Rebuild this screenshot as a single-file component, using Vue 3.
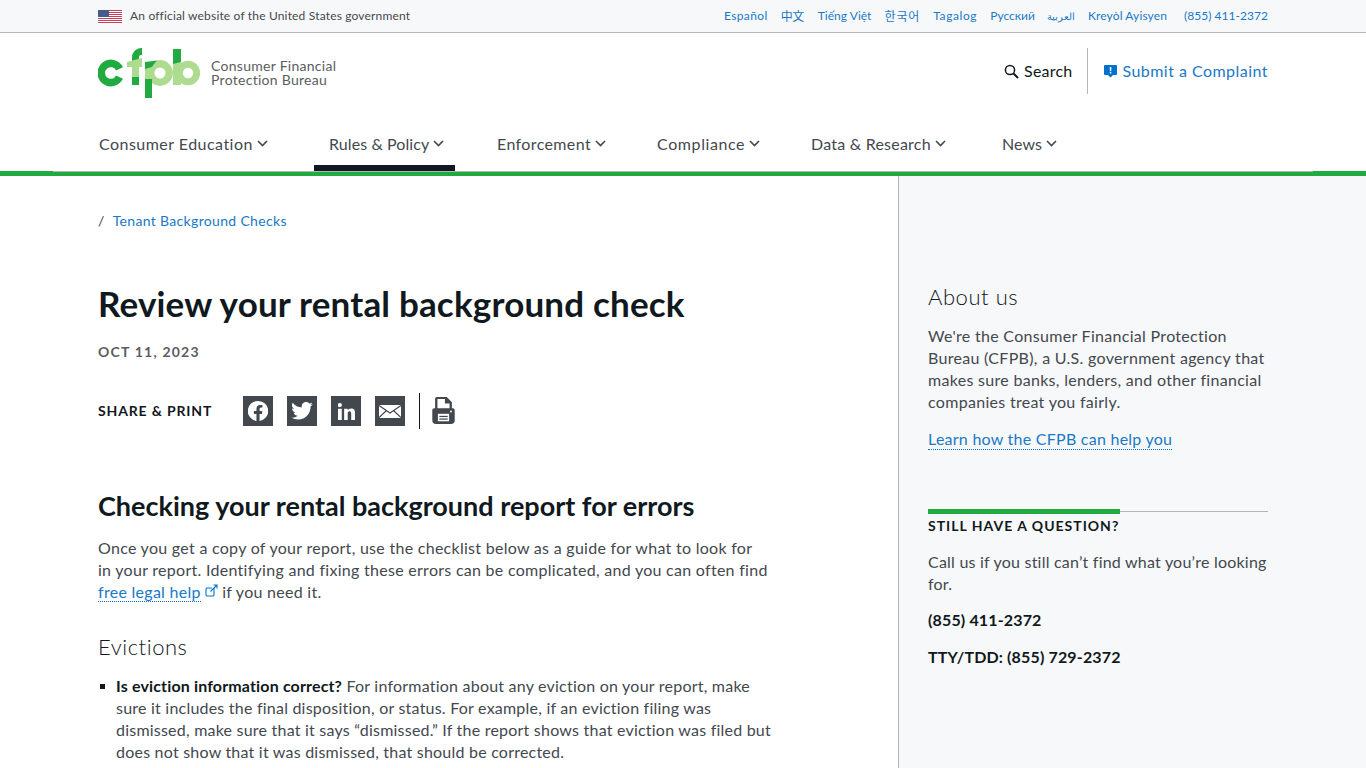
<script setup>
const langs = [
  ['Español', 'e'], ['中文', 'c'], ['Tiếng Việt', 'v'], ['한국어', 'k'], ['Tagalog', 't'],
  ['Русский', 'r'], ['العربية', 'a'], ['Kreyòl Ayisyen', 'l'], ['(855) 411-2372', 'p']
]
const nav = [
  { t: 'Consumer Education', w: 230, ls: 0.47, active: false },
  { t: 'Rules & Policy', w: 168, ls: 0.09, active: true },
  { t: 'Enforcement', w: 160, ls: 0.38, active: false },
  { t: 'Compliance', w: 154, ls: 0.6, active: false },
  { t: 'Data & Research', w: 191, ls: 0.23, active: false },
  { t: 'News', w: 100, ls: 0.05, active: false }
]
</script>

<template>
  <div class="page">
    <header>
      <div class="topbar">
        <div class="wrap topbar-in">
          <div class="official">
            <svg class="flag" width="24" height="13" viewBox="0 0 24 13">
              <rect width="24" height="13" fill="#fff"/>
              <g fill="#c8415a">
                <rect y="0" width="24" height="1"/><rect y="2" width="24" height="1"/><rect y="4" width="24" height="1"/>
                <rect y="6" width="24" height="1"/><rect y="8" width="24" height="1"/><rect y="10" width="24" height="1"/><rect y="12" width="24" height="1"/>
              </g>
              <rect width="11" height="7" fill="#4a5a8c"/>
            </svg>
            <span>An official website of the United States government</span>
          </div>
          <nav class="langs">
            <a v-for="l in langs" :key="l[0]" :class="'lang-' + l[1]">{{ l[0] }}</a>
          </nav>
        </div>
      </div>
      <div class="wrap brand-row">
        <div class="logo">
          <svg width="102" height="50" viewBox="0 0 102 50">
            <path d="M21.500 20.800A9.600 9.600 0 1 0 21.500 29.200" fill="none" stroke="#20aa3f" stroke-width="7.600"/>
            <path d="M34 13V9A9 9 0 0 1 43 0h1v7h-1a2 2 0 0 0-2 2v3z" fill="#20aa3f"/>
            <path d="M29 14l15-4v9h-3v11h-7V19h-5z" fill="#addc91"/>
            <path d="M34 29h7v8h-7z" fill="#20aa3f"/>
            <path d="M62 15.800a9.200 9.200 0 1 1 0 18.400 9.200 9.200 0 0 1 0-18.400z" fill="none" stroke="#addc91" stroke-width="7.400"/>
            <path d="M47 14h7v17h-7z" fill="#addc91"/>
            <path d="M47 31h7v19h-7z" fill="#20aa3f"/>
            <path d="M47 14l12-1.500-3 3.500-2 3-7 2z" fill="#20aa3f"/>
            <path d="M90 16.300a8.700 8.700 0 1 1 0 17.400 8.700 8.700 0 0 1 0-17.400z" fill="none" stroke="#addc91" stroke-width="7"/>
            <path d="M75 13h8v24h-8z" fill="#addc91"/>
            <path d="M75 1h8v13l-8 2z" fill="#20aa3f"/>
          </svg>
          <div class="logo-text">Consumer Financial<br>Protection Bureau</div>
        </div>
        <div class="actions">
          <a class="search">
            <svg width="15" height="15" viewBox="0 0 15 15" fill="none" stroke="#101820" stroke-width="1.500">
              <circle cx="6" cy="6" r="4.600"/><path d="M9.500 9.500L14 14" stroke-width="2"/>
            </svg>
            Search
          </a>
          <span class="vr"></span>
          <a class="complaint">
            <svg width="13" height="13" viewBox="0 0 13 13">
              <path d="M1 0h11a1 1 0 0 1 1 1v8a1 1 0 0 1-1 1H9l-2.500 2.500L4 10H1a1 1 0 0 1-1-1V1a1 1 0 0 1 1-1z" fill="#0072ce"/>
              <rect x="5.800" y="2" width="1.500" height="4.200" fill="#fff"/><rect x="5.800" y="7" width="1.500" height="1.500" fill="#fff"/>
            </svg>
            Submit a Complaint
          </a>
        </div>
      </div>
      <div class="wrap nav">
        <a v-for="n in nav" :key="n.t" class="nav-item" :class="{ active: n.active }" :style="{ width: n.w + 'px', letterSpacing: n.ls + 'px' }">
          <span>{{ n.t }}</span>
          <svg width="11" height="7" viewBox="0 0 11 7" fill="none" stroke="#43484e" stroke-width="1.600"><path d="M1 1l4.500 4.500L10 1"/></svg>
        </a>
      </div>
      <div class="rule"><div class="rule-gray"></div></div>
    </header>

    <div class="columns">
      <main>
        <div class="crumb"><span class="slash">/</span><a>Tenant Background Checks</a></div>
        <h1>Review your rental background check</h1>
        <div class="date">OCT 11, 2023</div>
        <div class="share">
          <span class="share-label">SHARE &amp; PRINT</span>
          <div class="share-icons">
            <span class="sq">
              <svg width="20" height="20" viewBox="1 1 22 22"><path fill="#fff" fill-rule="evenodd" d="M12 1a11 11 0 0 0-1.700 21.900v-7.700H7.500V12h2.800V9.600c0-2.800 1.600-4.300 4.100-4.300 1.200 0 2.500.2 2.500.2v2.700h-1.400c-1.400 0-1.800.9-1.800 1.700V12h3.100l-.5 3.200h-2.600v7.700A11 11 0 0 0 12 1z"/></svg>
            </span>
            <span class="sq">
              <svg width="22" height="18" viewBox="0 0 24 20"><path fill="#fff" d="M24 2.400a9.800 9.800 0 0 1-2.800.8A5 5 0 0 0 23.300.5a9.800 9.800 0 0 1-3.100 1.200 4.900 4.900 0 0 0-8.400 4.500A14 14 0 0 1 1.700.9a4.900 4.900 0 0 0 1.500 6.600A4.900 4.900 0 0 1 1 6.900a4.900 4.900 0 0 0 3.900 4.900 4.900 4.900 0 0 1-2.200.1 4.900 4.900 0 0 0 4.600 3.400A9.900 9.900 0 0 1 0 17.300 14 14 0 0 0 7.500 19.500c9.100 0 14.300-7.700 14-14.600A10 10 0 0 0 24 2.400z"/></svg>
            </span>
            <span class="sq">
              <svg width="17" height="17" viewBox="0 0 18 18"><path fill="#fff" d="M0 6h4v12H0zM2 0a2.200 2.200 0 1 1 0 4.400A2.200 2.200 0 0 1 2 0zM6.500 6h3.800v1.700c.6-1 1.900-2 3.800-2 3.500 0 3.900 2.300 3.900 5.300v7h-4v-6.200c0-1.500 0-3-1.800-3s-1.900 1.400-1.900 2.900V18h-3.800z"/></svg>
            </span>
            <span class="sq">
              <svg width="22" height="13" viewBox="0 0 22 13"><rect width="22" height="13" fill="#fff"/><path d="M0 .5l11 7.500L22 .5M0 12.500l7.500-7M22 12.500l-7.500-7" fill="none" stroke="#43484e" stroke-width="1.200"/></svg>
            </span>
            <span class="divider"></span>
            <svg class="printer" width="23" height="28" viewBox="0 0 24 30">
              <path fill="#43484e" fill-rule="evenodd" d="M5 0h10.500L21 5.500V12h1a2 2 0 0 1 2 2v11a4 4 0 0 1-4 4H4a4 4 0 0 1-4-4V14a2 2 0 0 1 2-2h1V2a2 2 0 0 1 2-2zm.500 2.200V12h13V7h-5V2.200z"/>
              <rect x="6" y="18" width="12" height="8" fill="#fff"/>
              <rect x="7.500" y="20.200" width="9" height="1.300" fill="#43484e"/>
              <rect x="7.500" y="23" width="9" height="1.300" fill="#43484e"/>
              <circle cx="20" cy="15.500" r="1" fill="#fff"/>
            </svg>
          </div>
        </div>
        <h2>Checking your rental background report for errors</h2>
        <p class="lead">Once you get a copy of your report, use the checklist below as a guide for what to look for<br>in your report. Identifying and fixing these errors can be complicated, and you can often find <a class="dotted">free legal help</a><svg class="ext" width="13" height="13" viewBox="0 0 13 13" fill="none" stroke="#0072ce" stroke-width="1.100"><path d="M9 4.500V11a1 1 0 0 1-1 1H2a1 1 0 0 1-1-1V5a1 1 0 0 1 1-1h5"/><path d="M5.500 7.500L12 1M8.500 1H12v3.500"/></svg> if you need it.</p>
        <h3>Evictions</h3>
        <ul>
          <li><b>Is eviction information correct?</b> For information about any eviction on your report, make sure it includes the final disposition, or status. For example, if an eviction filing was dismissed, make sure that it says “dismissed.” If the report shows that eviction was filed but does not show that it was dismissed, that should be corrected.</li>
        </ul>
      </main>
      <aside>
        <h3 class="about">About us</h3>
        <p class="about-p">We're the Consumer Financial Protection Bureau (CFPB), a U.S. government agency that makes sure banks, lenders, and other financial companies treat you fairly.</p>
        <a class="dotted learn">Learn how the CFPB can help you</a>
        <div class="bar"><span></span></div>
        <h4>STILL HAVE A QUESTION?</h4>
        <p class="call">Call us if you still can’t find what you’re looking for.</p>
        <p class="phone">(855) 411-2372</p>
        <p class="phone">TTY/TDD: (855) 729-2372</p>
      </aside>
    </div>
  </div>
</template>

<style>
html, body { margin: 0; overflow: hidden; background: #fff; }
</style>

<style scoped>
.page { height: 768px; overflow: hidden; font-family: Lato, "Noto Sans", sans-serif; color: #43484e; font-size: 16px; line-height: 22px; display: flex; flex-direction: column; }
a { color: #1a78c6; text-decoration: none; }
.wrap { width: 1170px; margin-left: 98px; }
.topbar { height: 32px; background: #f7f8f9; border-bottom: 1px solid #b4b5b6; }
.topbar-in { display: flex; justify-content: space-between; align-items: center; height: 32px; }
.official { display: flex; align-items: center; gap: 8px; font-size: 12px; color: #43484e; letter-spacing: .17px; }
.flag { display: block; }
.langs { display: flex; gap: 13px; font-size: 12px; letter-spacing: .1px; }
.lang-l { letter-spacing: .12px; }
.lang-e { letter-spacing: .4px; }
.lang-v { letter-spacing: .02px; margin-left: 1px; }
.lang-t { letter-spacing: .6px; }
.lang-r { letter-spacing: .02px; }
.lang-c, .lang-k { font-family: "Noto Sans CJK KR", sans-serif; }
.lang-c { letter-spacing: -.5px; }
.lang-k { letter-spacing: .9px; }
.lang-a { font-size: 10px; margin-left: -1px; }
.lang-p { margin-left: 4px; letter-spacing: .03px; }
.brand-row { height: 87px; display: flex; justify-content: space-between; align-items: flex-start; }
.logo { display: flex; align-items: center; margin-top: 15px; gap: 11px; }
.logo svg { display: block; }
.logo-text { font-size: 14px; line-height: 14px; color: #5a5d61; letter-spacing: .28px; margin-top: -1px; }
.actions { display: flex; align-items: center; margin-top: 15px; height: 46px; font-size: 16px; }
.search { display: flex; align-items: center; gap: 5px; color: #101820; letter-spacing: .2px; }
.vr { width: 1px; height: 46px; background: #b4b5b6; margin: 0 16px 0 15px; }
.complaint { display: flex; align-items: center; gap: 5px; letter-spacing: .47px; }
.nav { display: flex; height: 51px; padding-left: 1px; }
.nav-item { display: flex; align-items: flex-start; justify-content: flex-start; gap: 4px; padding-top: 13px; box-sizing: border-box; color: #43484e; position: relative; flex: none; }
.nav-item svg { margin-top: 7px; }
.nav-item.active::after { content: ""; position: absolute; left: -15px; width: 141px; bottom: 0; height: 6px; background: #101820; }
.rule { height: 5px; background: #20aa3f; }
.rule-gray { height: 1px; margin: 0 53px; background: #b4b5b6; }
.columns { display: flex; flex: 1; min-height: 0; }
main { width: 898px; flex: none; box-sizing: border-box; padding-left: 98px; }
aside { flex: 1; background: #f7f8f9; border-left: 1px solid #b4b5b6; padding: 107px 98px 0 29px; }
.crumb { margin-top: 35px; font-size: 14px; line-height: 20px; display: flex; gap: 8px; letter-spacing: .33px; }
h1 { margin: 50px 0 0; font-size: 35px; line-height: 44px; font-weight: 700; color: #101820; letter-spacing: .17px; }
.date { margin-top: 18px; font-size: 14px; line-height: 18px; font-weight: 700; letter-spacing: 1.2px; color: #5a5d61; }
.share { display: flex; align-items: center; margin-top: 31px; height: 38px; }
.share-label { font-size: 14px; font-weight: 700; letter-spacing: .85px; color: #101820; width: 145px; }
.share-icons { display: flex; align-items: center; gap: 14px; }
.sq { width: 30px; height: 30px; background: #43484e; display: flex; align-items: center; justify-content: center; }
.divider { width: 1px; height: 36px; background: #101820; }
.printer { margin-left: -2px; }
h2 { margin: 60px 0 0; font-size: 27px; line-height: 32px; font-weight: 700; color: #101820; }
.lead { margin: 15px 0 0; width: 675px; letter-spacing: .28px; }
.dotted { border-bottom: 1px dotted #0072ce; }
.ext { margin-left: 4px; vertical-align: 1px; }
h3 { font-weight: 300; font-size: 22px; line-height: 28px; color: #101820; margin: 0; letter-spacing: .55px; }
main h3 { margin-top: 30px; }
ul { list-style: none; margin: 14px 0 0; padding: 0 0 0 18px; width: 660px; position: relative; letter-spacing: .22px; }
li::before { content: ""; position: absolute; left: 2px; top: 9px; width: 5px; height: 5px; background: #101820; }
b { color: #101820; font-weight: 700; letter-spacing: .15px; }
.about-p { margin: 14px 0 0; letter-spacing: .3px; }
.learn { display: inline-block; margin-top: 15px; line-height: 21px; font-size: 16px; letter-spacing: .25px; }
.bar { margin-top: 59px; position: relative; height: 5px; background: linear-gradient(#b4b5b6, #b4b5b6) 0 2px / 100% 1px no-repeat; }
.bar span { position: absolute; left: 0; top: 0; width: 192px; height: 5px; background: #20aa3f; }
h4 { margin: 2px 0 0; font-size: 14px; line-height: 20px; font-weight: 700; letter-spacing: 1px; color: #101820; }
.call { margin: 15px 0 0; letter-spacing: .22px; }
.phone { margin: 15px 0 0; font-weight: 700; color: #101820; letter-spacing: .15px; }
.call + .phone { margin-top: 14px; }
</style>
